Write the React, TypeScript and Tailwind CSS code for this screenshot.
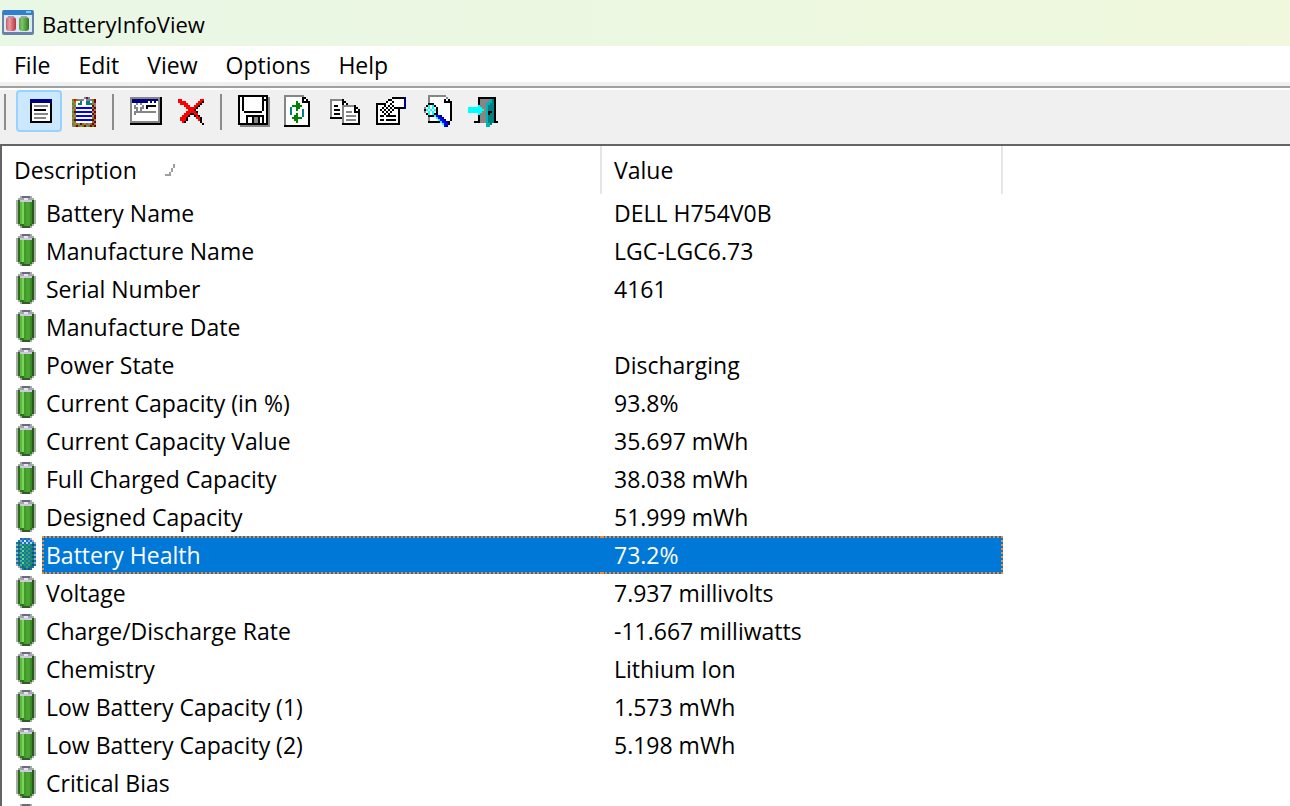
import { clsx } from "clsx";

type Item = { description: string; value: string };

const items: Item[] = [
  { description: "Battery Name", value: "DELL H754V0B" },
  { description: "Manufacture Name", value: "LGC-LGC6.73" },
  { description: "Serial Number", value: "4161" },
  { description: "Manufacture Date", value: "" },
  { description: "Power State", value: "Discharging" },
  { description: "Current Capacity (in %)", value: "93.8%" },
  { description: "Current Capacity Value", value: "35.697 mWh" },
  { description: "Full Charged Capacity", value: "38.038 mWh" },
  { description: "Designed Capacity", value: "51.999 mWh" },
  { description: "Battery Health", value: "73.2%" },
  { description: "Voltage", value: "7.937 millivolts" },
  { description: "Charge/Discharge Rate", value: "-11.667 milliwatts" },
  { description: "Chemistry", value: "Lithium Ion" },
  { description: "Low Battery Capacity (1)", value: "1.573 mWh" },
  { description: "Low Battery Capacity (2)", value: "5.198 mWh" },
  { description: "Critical Bias", value: "" },
  { description: "", value: "" },
];

const menus = ["File", "Edit", "View", "Options", "Help"];

// one letter per pixel, "." is transparent
const palette: Record<string, string> = {
  K: "#000000",
  W: "#ffffff",
  G: "#868686",
  L: "#a0a0a0",
  N: "#000080",
  B: "#0000ff",
  O: "#808000",
  M: "#800000",
  R: "#ff0000",
  P: "#800080",
  T: "#008080",
  C: "#00ffff",
  g: "#008000",
  D: "#00b4b4",
};

const icons = {
  details: [
    "",
    "",
    "...NNNNNNNNNNN",
    "...NNNNNNNNNNN",
    "...KWWWWWWWWWK",
    "...KWGGGGGGGWK",
    "...KWWWWWWWWWK",
    "...KWKKKKKKWWK",
    "...KWWWWWWWWWK",
    "...KWGGGGGGGWK",
    "...KWWWWWWWWWK",
    "...KWGGGGGGWWK",
    "...KWWWWWWWWWK",
    "...KKKKKKKKKKK",
  ],
  clipboard: [
    "",
    ".......GPG...",
    ".OROGGGWGGGOM",
    ".GOWWTWWTTWGM",
    ".OGWTTWWTTTOG",
    ".GOWWWWWWWWMG",
    ".OGBBBBBBBBOM",
    ".GOWWWWWWWWMG",
    ".OMBBBBBBBBGM",
    ".GOWWWWWWWWMO",
    ".OGBBBBBBBBGM",
    ".GOWWWWWWWWOM",
    ".OMBBBBBBBBMG",
    ".GOWWWWWWWWOM",
    ".OGOGMOGOGOMG",
    ".GOMOGOMGOMOM",
  ],
  properties: [
    "",
    "GGGGGGGGGGGGGGGK",
    "GNNNNNNNNNNNNNGK",
    "GNNNNNNNNWNWNWGK",
    "GWWGWGWWWWWWWWGK",
    "GWGWWWGWKKKKKWGK",
    "GWGGWGGWKWWWWWGK",
    "GWWGWGWWWWWWWWGK",
    "GWGGGGGGGGGGGWGK",
    "GWGWWWWWWWWWWWGK",
    "GWWWWWWWWWWWWWGK",
    "GWWWWWWWWWWWWWGK",
    "GWWWWWWWWWWWWWGK",
    "GGGGGGGGGGGGGGGK",
    "KKKKKKKKKKKKKKKK",
  ],
  remove: [
    "",
    "",
    ".RR.........RR",
    ".RRRR......RRK",
    "..RRRR....RRK",
    "....RRR..RRK",
    ".....RRRRRK",
    "......RRRK",
    ".....RRRRRK",
    "....RRRKKRR",
    "...RRRK..KRK",
    "..RRRK....RRK",
    "..RRRK.....RK",
    "...RK.......K",
    ".............K",
  ],
  save: [
    "KKKKKKKKKKKKKKK",
    "KWKWWWWWWWWWKWKG",
    "KWKWWWWWWWWWKKKG",
    "KWKWWWWWWWWWKWKG",
    "KWKWWWWWWWWWKWKG",
    "KWKWWWWWWWWWKWKG",
    "KWKWWWWWWWWWKWKG",
    "KWKWWWWWWWWWKWKG",
    "KWWKKKKKKKKKWWKG",
    "KWWWWWWWWWWWWWKG",
    "KWWWKKKKKKKKKWKG",
    "KWWWKWWKGGKWKWKG",
    "KWWWKWWKGGKWKWKG",
    "KWWWKWWKGGKWKWKG",
    "KKKKKKKKKKKKKKKG",
    ".GGGGGGGGGGGGGGG",
  ],
  refresh: [
    "GGGGGGGGGG",
    "GWWWWWWWWKK",
    "GWWWWWWWWKWK",
    "GWWWWWgWWKKKK",
    "GWWWWWggWWWWK",
    "GWWWgggggWWWK",
    "GWWTWWggWWWWK",
    "GWWTWWgWWTWWK",
    "GWWTWWWWWTWWK",
    "GWWTWWgWWTWWK",
    "GWWWWggWWTWWK",
    "GWWWgggggWWWK",
    "GWWWWggWWWWWK",
    "GWWWWWgWWWWWK",
    "GWWWWWWWWWWWK",
    "KKKKKKKKKKKKK",
  ],
  copy: [
    "",
    "",
    "GGGGGGK",
    "GWWWWWKK",
    "GWWWWWKWK",
    "GWKKWWGGGGGGK",
    "GWWWWWGWWWWWKK",
    "GWKKKWGWWWWWKWK",
    "GWWWWWGWGGGWKKK",
    "GWKKKWGWWWWWWWK",
    "GWWWWWGWGGGGGWK",
    "KKKKKKGWWWWWWWK",
    "......GWGGGGGWK",
    "......GWWWWWWWK",
    "......KKKKKKKKK",
  ],
  form: [
    "",
    "........KKKKKKN",
    "......KKWWWWWWN",
    ".....KWWKWWWWWN",
    "KKKKKWWKWWWWWWN",
    "KWWWKWKWKWWWWWN",
    "KWWKWKWKWKKKKKN",
    "KWKWKWKWKWWK",
    "KWWKWKWKWWWK",
    "KWWWKWKWWWWK",
    "KWKKWKKKKKWK",
    "KWWWWWWWWWWK",
    "KWKKWKKKKKWK",
    "KWWWWWWWWWWK",
    "KKKKKKKKKKKK",
  ],
  find: [
    "...GGGGGGGGG",
    "...GWWWWWWWWG",
    "...GWWWWWWWKWK",
    "...GWWWWWWWKKKK",
    "...KKKWWWWWWWWK",
    "..KCWCKWWWWWWWK",
    ".GWCWCWKWWWWWWK",
    ".KCWCWCKWWWWWWK",
    ".GWCWCWKWWWWWWK",
    "..KCWCKKWWWWWWK",
    "...KKKCBBNWWWWK",
    "...GWWWCBBNWWWK",
    "...GWWWWCBBNWWK",
    "...KKKKKKCBBNK",
    "..........CBBN",
    "...........BN",
  ],
  exit: [
    "",
    ".....KKKKKKKKK",
    ".....KGGGGGDTK",
    ".....KGGGGDDTK",
    ".....KGGGDDTTK",
    ".....CGGGDTTTK",
    "CCCCCCCGGDTTTK",
    "CCCCCCCCGDTTTK",
    "CCCCCCCGGDKKTK",
    ".....CGGGDKTTK",
    ".....KGGGDTTTK",
    ".....KGGGDTTTK",
    ".....KGGGDTTTK",
    "...KKKGGGDTTTKK",
    ".........DDT",
    ".........DD",
  ],
  sort: ["....L", "....L", "...L", "...L", "..L", "LLL"],
};

function PixelIcon({ name, className }: { name: keyof typeof icons; className?: string }) {
  const size = name === "sort" ? 6 : 16;
  return (
    <svg
      viewBox={`0 0 ${size} ${size}`}
      shapeRendering="crispEdges"
      className={clsx("shrink-0", className)}
      aria-hidden="true"
    >
      {icons[name].flatMap((row, y) =>
        [...row].map((c, x) =>
          c === "." ? null : <rect key={`${x}-${y}`} x={x} y={y} width="1" height="1" fill={palette[c]} />,
        ),
      )}
    </svg>
  );
}

function AppIcon() {
  return (
    <svg viewBox="0 0 32 28" className="h-7 w-8 shrink-0" aria-hidden="true">
      <defs>
        <linearGradient id="red">
          <stop offset="0" stopColor="#c9606a" />
          <stop offset="0.35" stopColor="#e79a9c" />
          <stop offset="1" stopColor="#b8323c" />
        </linearGradient>
        <linearGradient id="green">
          <stop offset="0" stopColor="#5a9a52" />
          <stop offset="0.3" stopColor="#7cc866" />
          <stop offset="1" stopColor="#2c7a1c" />
        </linearGradient>
      </defs>
      <rect x="0" y="1" width="32" height="25" rx="2" fill="#6c80ac" />
      <rect x="1" y="1" width="30" height="5" rx="1" fill="#2f80cf" />
      <rect x="24" y="2" width="5" height="2" fill="#8fc4ee" />
      <rect x="2" y="6" width="28" height="17" fill="#dfe6f3" />
      <rect x="4" y="8" width="10" height="14" rx="3" fill="url(#red)" />
      <rect x="6" y="7" width="6" height="2" fill="#a99aa6" />
      <rect x="17" y="8" width="10" height="14" rx="3" fill="url(#green)" />
      <rect x="19" y="7" width="6" height="2" fill="#9aa89a" />
    </svg>
  );
}

function BatteryIcon({ selected }: { selected: boolean }) {
  return (
    <svg viewBox="0 0 10 16" shapeRendering="crispEdges" className="h-8 w-5" aria-hidden="true">
      <defs>
        <pattern id="dither" width="2" height="2" patternUnits="userSpaceOnUse">
          <rect width="1" height="1" fill="#0078d7" />
          <rect x="1" y="1" width="1" height="1" fill="#0078d7" />
        </pattern>
      </defs>
      <path d="M2 0h6v1h1v1h1v12h-1v1h-1v1h-6v-1h-1v-1h-1v-12h1v-1h1z" fill="#a5ada5" />
      <path d="M2 1h6v1h1v12h-1v1h-6v-1h-1v-12h1z" fill="#2d7519" />
      <rect x="2" y="3" width="1" height="11" fill="#5cb83e" />
      <rect x="3" y="3" width="1" height="11" fill="#7cd45c" />
      <rect x="4" y="3" width="1" height="12" fill="#3f9a28" />
      <rect x="5" y="3" width="2" height="12" fill="#4ba432" />
      <rect x="7" y="3" width="1" height="11" fill="#3b8c24" />
      <rect x="8" y="2" width="1" height="12" fill="#265a18" />
      <rect x="1" y="2" width="1" height="12" fill="#2f6b1e" />
      <rect x="3" y="0" width="4" height="1" fill="#6c6880" />
      <rect x="2" y="1" width="6" height="1" fill="#a5a3b8" />
      <rect x="2" y="2" width="6" height="1" fill="#c9cad6" />
      <rect x="4" y="1" width="2" height="1" fill="#e6e6f0" />
      <rect x="3" y="15" width="4" height="1" fill="#39572f" />
      {selected && (
        <path d="M2 0h6v1h1v1h1v12h-1v1h-1v1h-6v-1h-1v-1h-1v-12h1v-1h1z" fill="url(#dither)" />
      )}
    </svg>
  );
}

function ToolButton({
  name,
  label,
  active = false,
}: {
  name: keyof typeof icons;
  label: string;
  active?: boolean;
}) {
  return (
    <button
      type="button"
      aria-label={label}
      aria-pressed={active}
      className={clsx(
        "flex h-[42px] w-[46px] items-center rounded border-2 pl-1.5",
        active ? "border-[#99d1ff] bg-[#cce8ff]" : "border-transparent",
      )}
    >
      <PixelIcon name={name} className="size-8" />
    </button>
  );
}

function Separator() {
  return <div className="mt-1 mr-2 ml-1 h-9 w-0.5 shrink-0 bg-[#8c8c8c]" />;
}

function Row({ item, selected }: { item: Item; selected: boolean }) {
  const cell = selected
    ? "border-y-2 border-dotted border-[#ff8728] bg-[#0078d7] text-white"
    : "border-y-2 border-transparent";
  return (
    <tr className="h-[38px]" aria-selected={selected}>
      <td className="p-0 pl-3.5 align-top">
        <div className="pt-0.5">
          <BatteryIcon selected={selected} />
        </div>
      </td>
      <td className={clsx("p-0 pl-0.5", cell, "border-l-2")}>{item.description}</td>
      <td className={clsx("p-0 pl-3", cell, "border-r-2")}>{item.value}</td>
    </tr>
  );
}

export default function App() {
  return (
    <div className="flex h-screen flex-col overflow-hidden bg-white font-['Open_Sans','Noto_Sans',sans-serif] text-[23px] leading-8 text-black">
      <header className="flex h-[46px] shrink-0 items-center gap-2 bg-linear-to-r from-[#e9f7e5] to-[#eff8dc] pl-0.5">
        <AppIcon />
        <h1 className="pt-0.5 text-[22px]">BatteryInfoView</h1>
      </header>

      <nav className="flex h-9 shrink-0 items-center">
        {menus.map((menu) => (
          <button key={menu} type="button" className="px-3.5 pt-0.5">
            {menu}
          </button>
        ))}
      </nav>

      <div className="shrink-0 border-t-4 border-[#f0f0f0]">
        <div className="flex h-[58px] border-t-2 border-[#a0a0a0] bg-[#f0f0f0]">
          <div className="flex flex-1 items-start border-t-2 border-white">
            <Separator />
            <div className="flex pl-0.5">
              <ToolButton name="details" label="Details" active />
              <ToolButton name="clipboard" label="Log" />
            </div>
            <Separator />
            <div className="flex pr-0.5">
              <ToolButton name="properties" label="Window" />
              <ToolButton name="remove" label="Delete" />
            </div>
            <Separator />
            <div className="flex">
              <ToolButton name="save" label="Save" />
              <ToolButton name="refresh" label="Refresh" />
              <ToolButton name="copy" label="Copy" />
              <ToolButton name="form" label="Properties" />
              <ToolButton name="find" label="Find" />
              <ToolButton name="exit" label="Exit" />
            </div>
          </div>
        </div>
      </div>

      <main className="min-h-0 flex-1 overflow-hidden border-t-2 border-l-2 border-[#646464]">
        <table className="w-[1001px] table-fixed border-separate border-spacing-0 text-left whitespace-nowrap">
          <colgroup>
            <col className="w-10" />
            <col className="w-[560px]" />
            <col />
          </colgroup>
          <thead>
            <tr className="h-12">
              <th colSpan={2} className="border-r-2 border-[#e5e5e5] p-0 pl-3 font-normal">
                <span className="flex items-center gap-7">
                  Description
                  <PixelIcon name="sort" className="size-3" />
                </span>
              </th>
              <th className="border-r-2 border-[#e5e5e5] p-0 pl-3 font-normal">Value</th>
            </tr>
          </thead>
          <tbody>
            {items.map((item, i) => (
              <Row key={i} item={item} selected={item.description === "Battery Health"} />
            ))}
          </tbody>
        </table>
      </main>
    </div>
  );
}
